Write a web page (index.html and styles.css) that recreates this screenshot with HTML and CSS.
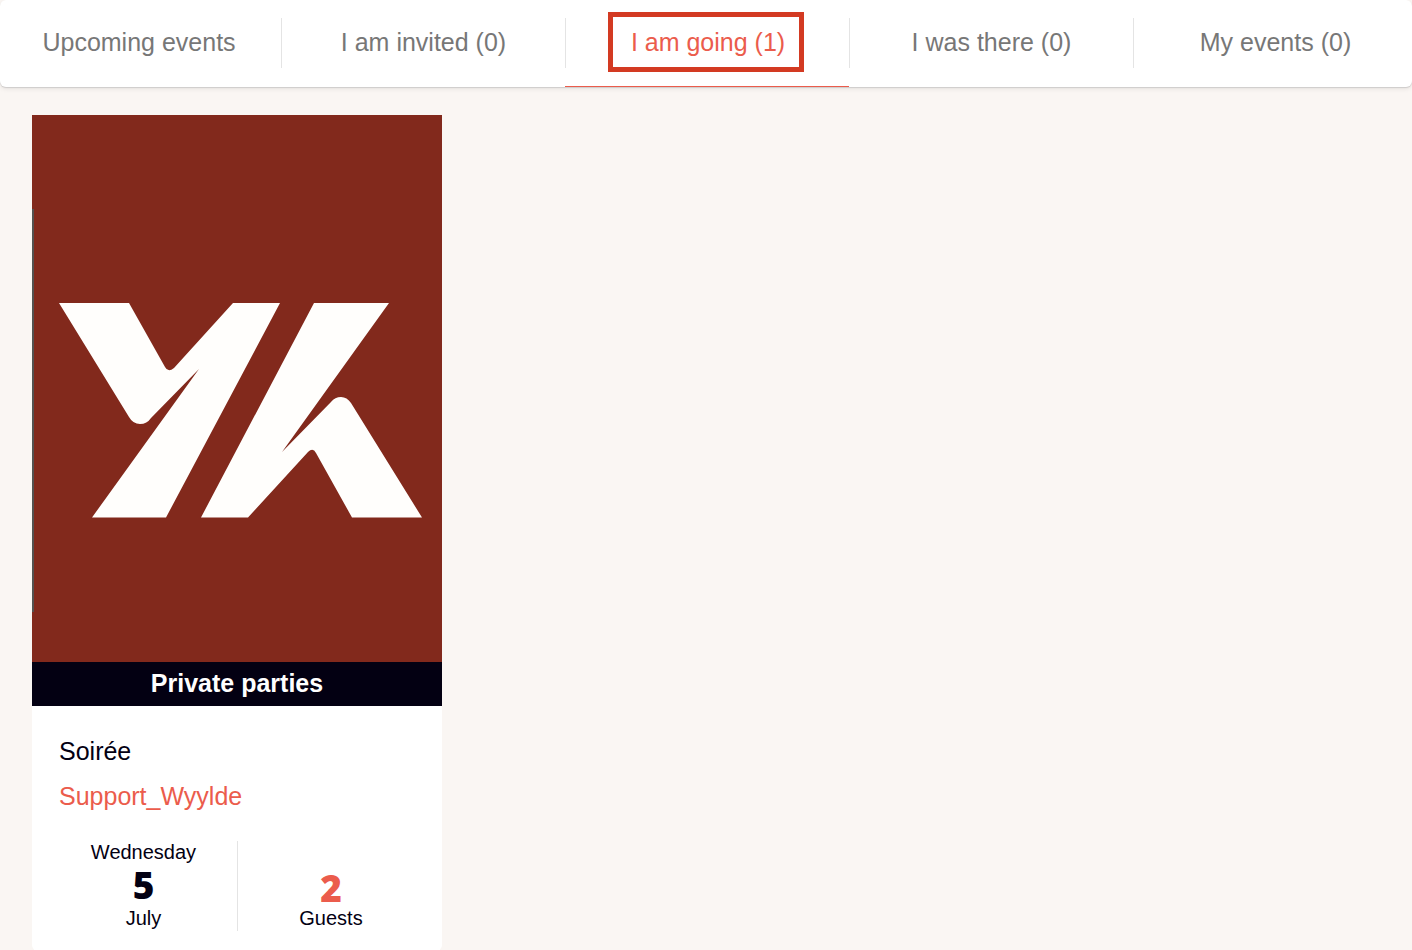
FILE: index.html
```
<!DOCTYPE html>
<html lang="en">
<head>
<meta charset="utf-8">
<title>Events</title>
<link rel="stylesheet" href="styles.css">
</head>
<body>
<nav class="tabs" aria-label="Events">
  <ul class="tab-list">
    <li class="tab"><a class="tab-link" href="#upcoming">Upcoming events</a></li>
    <li class="tab"><a class="tab-link" href="#invited">I am invited (0)</a></li>
    <li class="tab tab-active"><a class="tab-link" href="#going" aria-current="page"><span class="highlight">I am going (1)</span></a></li>
    <li class="tab"><a class="tab-link" href="#past">I was there (0)</a></li>
    <li class="tab"><a class="tab-link" href="#mine">My events (0)</a></li>
  </ul>
</nav>
<main class="events">
  <article class="card">
    <div class="poster">
      <svg class="poster-art" viewBox="0 0 410 547" role="img" aria-label="Wyylde logo">
        <path fill="#545250" d="M0 94h2v403H0z"/>
        <path fill="#fffefc" d="M27 188H97L133 252Q136 258 142 253L201 188H248L134 402.500H60L167 254L119 303Q115 309 108 309Q101 309 97 302Z"/>
        <path fill="#fffefc" d="M282 188H357L250 337L299 287Q303 282 309 282Q315 282 319 288L390 402.500H320L284 338Q281 332 276 337L216 402.500H169Z"/>
      </svg>
    </div>
    <p class="category">Private parties</p>
    <div class="card-body">
      <h2 class="title">Soirée</h2>
      <a class="host" href="#host">Support_Wyylde</a>
      <div class="facts">
        <div class="fact date"><span>Wednesday</span><strong class="number">5</strong><span>July</span></div>
        <div class="fact guests"><strong class="number">2</strong><span>Guests</span></div>
      </div>
    </div>
  </article>
</main>
</body>
</html>
```
FILE: styles.css
```
* {
  box-sizing: border-box;
}

body {
  margin: 0;
  min-height: 100vh;
  background: #faf6f3;
  color: #030012;
  font-family: "Liberation Sans", Arial, sans-serif;
  font-size: 25px;
  overflow-x: hidden;
}

.tabs {
  background: #fff;
  border-radius: 6px;
  box-shadow: 0 1px 1px #cfcccb, 0 2px 5px rgba(0, 0, 0, 0.08);
}

.tab-list {
  display: grid;
  grid-template-columns: repeat(5, 1fr);
  margin: 0 -5px 0 -3px;
  padding: 0;
  list-style: none;
}

.tab {
  display: flex;
  align-items: center;
  height: 87px;
  padding-bottom: 1px;
}

.tab-link {
  display: flex;
  flex: 1;
  align-items: center;
  justify-content: center;
  height: 50px;
  padding-bottom: 2px;
  border-left: 1px solid #e4e4e4;
  color: #777;
  line-height: 48px;
  text-decoration: none;
}

.tab:first-child .tab-link {
  border-left: 0;
}

.tab-active {
  padding-bottom: 0;
  border-bottom: 1px solid #eb5c4c;
}

.tab-active .tab-link {
  color: #eb5c4c;
}

.highlight {
  margin-right: 3px;
  padding: 1px 14px 1px 18px;
  border: 5px solid #d33a22;
}

.events {
  padding: 28px 32px;
}

.card {
  width: 410px;
  max-width: 100%;
  overflow: hidden;
  border-radius: 0 0 6px 6px;
  background: #fff;
}

.poster {
  background: #82291c;
}

.poster-art {
  display: block;
  width: 100%;
}

.category {
  margin: 0;
  padding-bottom: 2px;
  background: #030012;
  color: #fff;
  font-weight: 700;
  line-height: 42px;
  text-align: center;
}

.card-body {
  padding: 28px 27px 20px;
}

.title {
  margin: 0 0 10px;
  font-size: 25px;
  font-weight: 400;
  line-height: 35px;
}

.host {
  display: block;
  margin-bottom: 27px;
  color: #eb5c4c;
  line-height: 35px;
  text-decoration: none;
}

.facts {
  display: grid;
  grid-template-columns: 1fr 1fr;
  font-size: 20px;
  line-height: 24px;
}

.fact {
  display: flex;
  flex-direction: column;
  align-items: center;
  justify-content: flex-end;
  height: 90px;
  padding-bottom: 1px;
}

.date {
  padding-right: 9px;
}

.guests {
  padding-left: 9px;
  border-left: 1px solid #e4e4e4;
}

.number {
  font-family: "Open Sans", sans-serif;
  font-size: 37px;
  font-weight: 800;
  line-height: 42px;
}

.guests .number {
  color: #eb5c4c;
  line-height: 36px;
}
```
